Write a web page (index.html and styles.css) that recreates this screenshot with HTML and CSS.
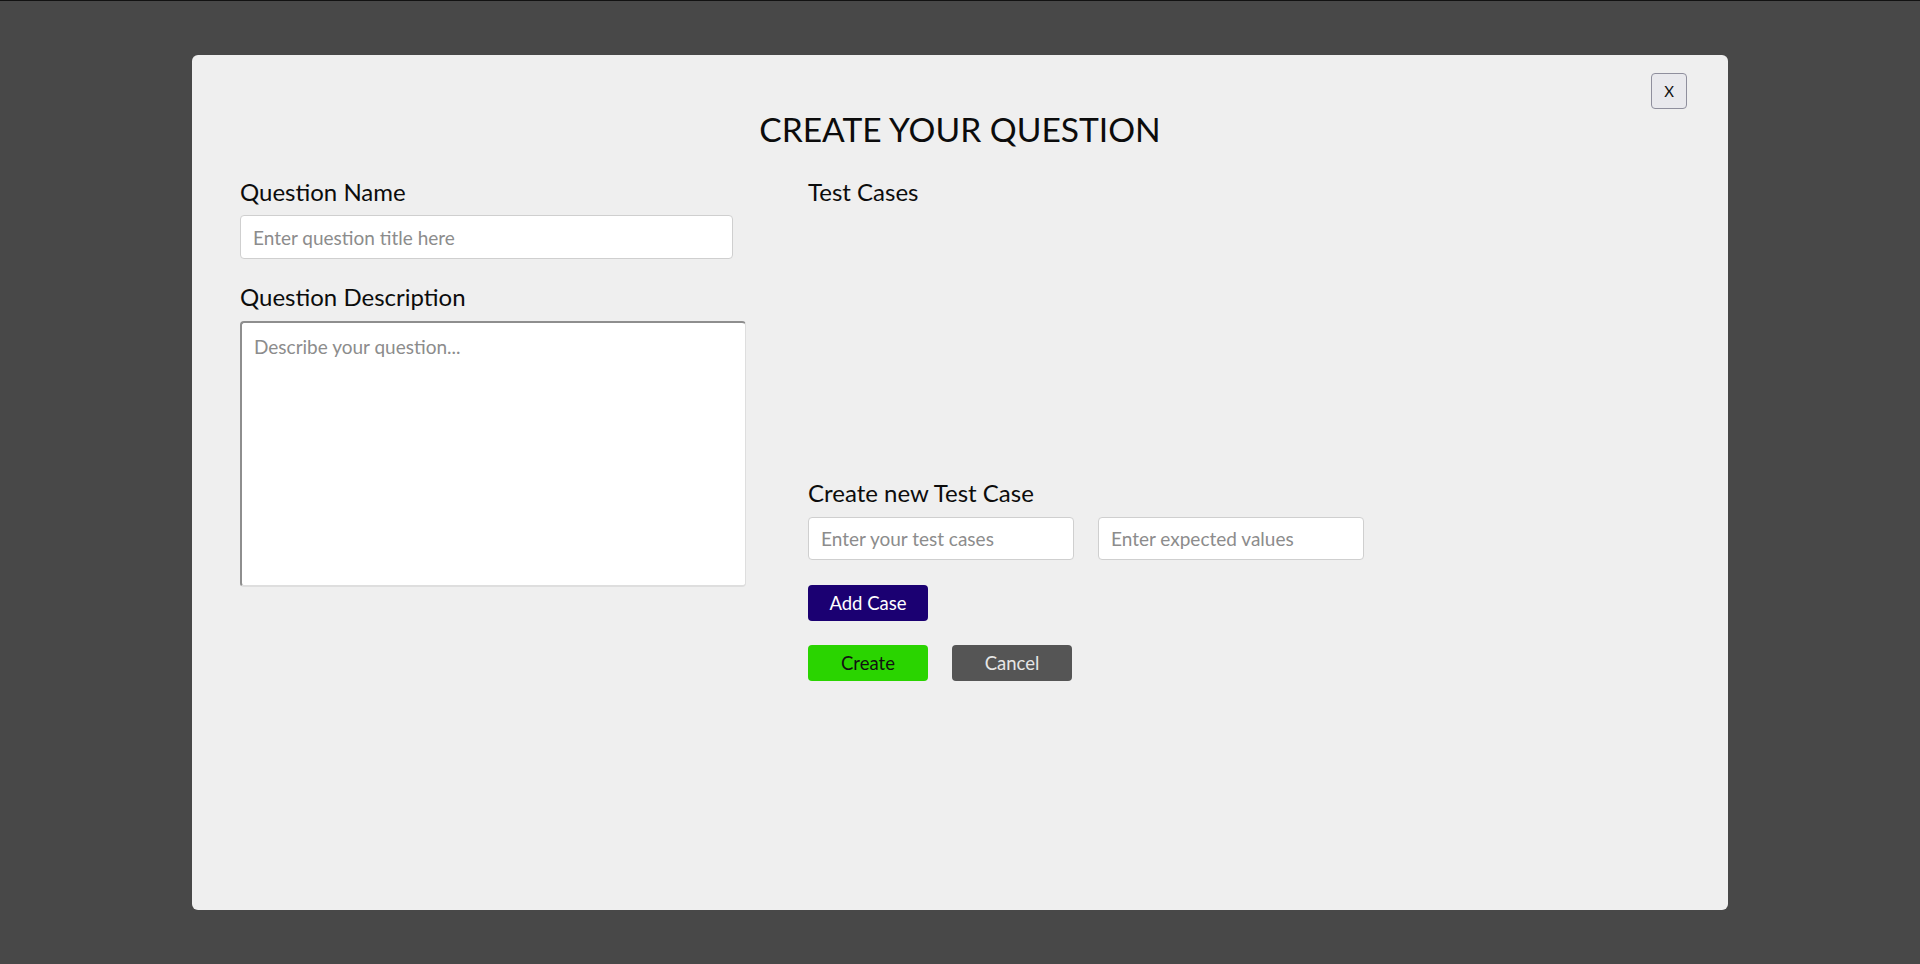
FILE: index.html
```html
<!DOCTYPE html>
<html lang="en">
<head>
<meta charset="utf-8">
<title>Create your question</title>
<link rel="stylesheet" href="styles.css">
</head>
<body>
<div class="overlay">
  <div class="modal">
    <button class="close-btn" type="button">X</button>
    <h2 class="modal-title">CREATE YOUR QUESTION</h2>
    <div class="columns">
      <div class="col col-left">
        <label class="field-label">Question Name</label>
        <input class="text-input name-input" type="text" placeholder="Enter question title here">
        <label class="field-label desc-label">Question Description</label>
        <textarea class="desc-area" placeholder="Describe your question..."></textarea>
      </div>
      <div class="col col-right">
        <div class="field-label">Test Cases</div>
        <div class="case-list"></div>
        <div class="field-label">Create new Test Case</div>
        <div class="case-inputs">
          <input class="text-input case-input" type="text" placeholder="Enter your test cases">
          <input class="text-input case-input" type="text" placeholder="Enter expected values">
        </div>
        <div class="btn-row">
          <button class="btn btn-add" type="button">Add Case</button>
        </div>
        <div class="btn-row">
          <button class="btn btn-create" type="button">Create</button>
          <button class="btn btn-cancel" type="button">Cancel</button>
        </div>
      </div>
    </div>
  </div>
</div>
</body>
</html>
```
FILE: styles.css
```css
* { box-sizing: border-box; }
html, body { margin: 0; padding: 0; height: 100%; }
body {
  font-family: "Lato", "Open Sans", sans-serif;
  background: #484848;
  color: #111;
}
.overlay {
  height: 964px;
  border-top: 1px solid #121212;
  display: flex;
  justify-content: center;
  padding-top: 54px;
}
.modal {
  position: relative;
  width: 1536px;
  height: 855px;
  background: #efefef;
  border-radius: 6px;
  padding: 54px 48px 0 48px;
}
.close-btn {
  position: absolute;
  top: 18px;
  right: 41px;
  width: 36px;
  height: 36px;
  background: #e9e9ed;
  border: 1px solid #8f8f9d;
  border-radius: 4px;
  font-family: "Lato", sans-serif;
  font-size: 15px;
  color: #111;
  padding: 0;
}
.modal-title {
  margin: 0;
  text-align: center;
  font-weight: 400;
  font-size: 33.6px;
  line-height: 40px;
  color: #0c0c0c;
}
.columns {
  display: grid;
  grid-template-columns: 568px 1fr;
  margin-top: 29px;
}
.col { display: flex; flex-direction: column; align-items: flex-start; }
.field-label {
  display: block;
  font-size: 24px;
  line-height: 28.8px;
  color: #0c0c0c;
}
.text-input {
  height: 43.5px;
  margin-top: 8.5px;
  background: #fff;
  border: 1px solid #cfcfcf;
  border-radius: 4px;
  padding: 0 12px;
  font-family: "Lato", sans-serif;
  font-size: 19px;
  color: #222;
}
.text-input::placeholder, .desc-area::placeholder { color: #8c8c8c; }
.name-input { width: 493px; }
.desc-label { margin-top: 24.6px; }
.desc-area {
  margin-top: 9px;
  width: 506px;
  height: 266px;
  resize: none;
  background: #fff;
  border-style: solid;
  border-width: 2px 1px 2px 2px;
  border-color: #8e8e8e #dedede #dedede #8e8e8e;
  border-radius: 4px;
  padding: 12px 12px;
  font-family: "Lato", sans-serif;
  font-size: 19px;
}
.case-list { height: 272.5px; }
.case-inputs { display: flex; gap: 24px; }
.case-input { width: 266px; }
.btn-row { display: flex; gap: 24px; margin-top: 24.5px; }
.btn-row + .btn-row { margin-top: 24px; }
.btn {
  width: 120px;
  height: 36px;
  border: none;
  border-radius: 4px;
  font-family: "Lato", sans-serif;
  font-size: 18.5px;
  padding: 0;
}
.btn-add { background: #1b0072; color: #fff; }
.btn-create { background: #2ad400; color: #111; }
.btn-cancel { background: #555555; color: #e6e6e6; }
```
